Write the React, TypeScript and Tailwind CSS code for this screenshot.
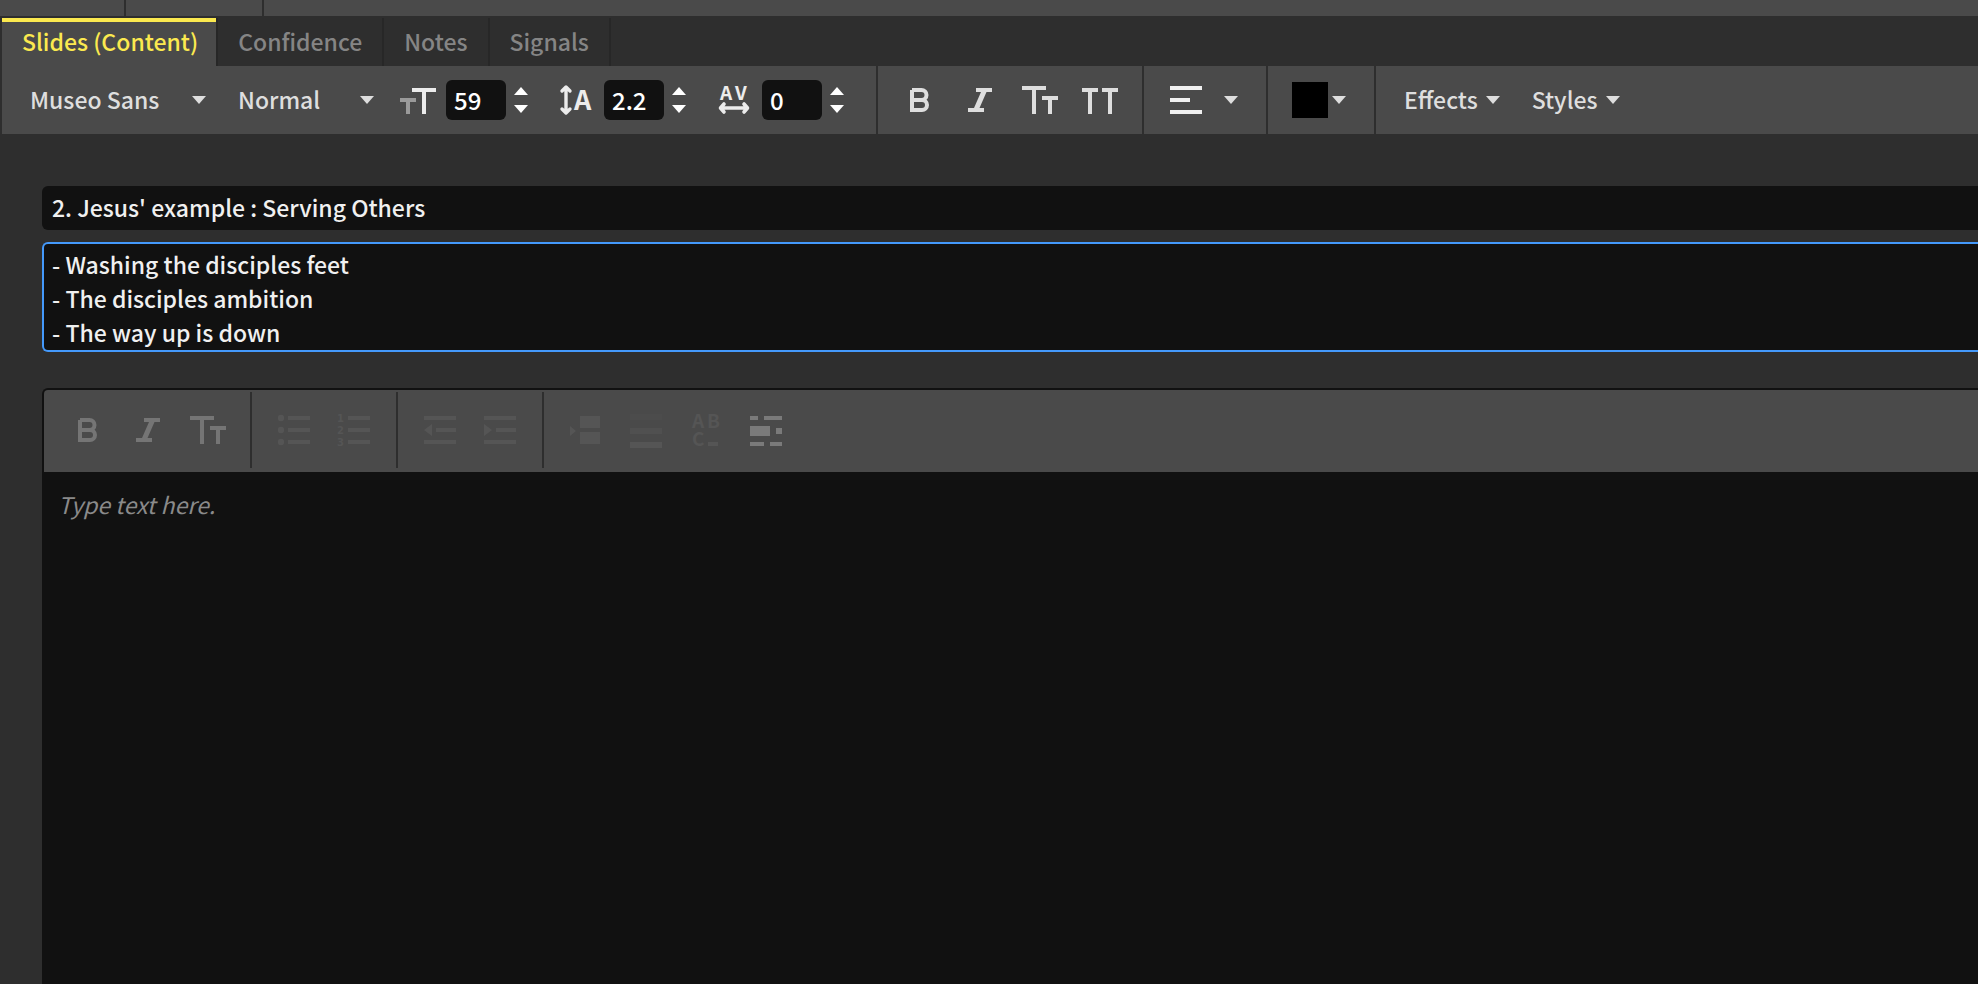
import { useState, type ReactNode } from "react";

function Icon({ children, className = "" }: { children: ReactNode; className?: string }) {
  return (
    <svg width="36" height="32" viewBox="0 0 36 32" fill="currentColor" aria-hidden="true" className={`shrink-0 overflow-visible ${className}`}>
      {children}
    </svg>
  );
}

const BoldIcon = () => (
  <Icon>
    <path d="M10 6H19.5A5 5 0 0 1 19.5 16H10M19.5 16H20A5 5 0 0 1 20 26H10V6" fill="none" stroke="currentColor" strokeWidth="4" />
  </Icon>
);

const ItalicIcon = () => (
  <Icon>
    <path d="M14 4H30V8H24.5L17.5 24H22V28H6V24H12L19 8H14Z" />
  </Icon>
);

const SmallCapsIcon = () => (
  <Icon>
    <path d="M0 2H24V6H14V30H10V6H0ZM20 12H36V16H30V30H26V16H20Z" />
  </Icon>
);

const AllCapsIcon = () => (
  <Icon>
    <path d="M0 4H16V8H10V30H6V8H0ZM20 4H36V8H30V30H26V8H20Z" />
  </Icon>
);

const FontSizeIcon = () => (
  <Icon>
    <path d="M0 14H16V18H10V30H6V18H0Z" fill="#9a9a9a" />
    <path d="M12 4H36V8H26V30H22V8H12Z" />
  </Icon>
);

const LineHeightIcon = () => (
  <Icon>
    <path d="M8 4V28M4 7L8 3L12 7M4 25L8 29L12 25" fill="none" stroke="currentColor" strokeWidth="3.4" strokeLinecap="round" strokeLinejoin="round" />
    <text x="16" y="26" className="text-[27px] font-bold">A</text>
  </Icon>
);

const TrackingIcon = () => (
  <Icon>
    <text x="4" y="16" className="text-[19px] font-bold">A</text>
    <text x="19" y="16" className="text-[19px] font-bold">V</text>
    <path d="M5 24H31M8 20L4.5 24L8 28M28 20L31.5 24L28 28" fill="none" stroke="currentColor" strokeWidth="3.6" strokeLinecap="round" strokeLinejoin="round" />
  </Icon>
);

const AlignLeftIcon = () => (
  <svg width="32" height="28" viewBox="0 0 32 28" fill="#f0f0f0" aria-hidden="true">
    <path d="M0 0H32V4H0ZM0 12H20V16H0ZM0 24H32V28H0Z" />
  </svg>
);

const BulletsIcon = () => (
  <Icon>
    <circle cx="5" cy="4" r="3.2" />
    <circle cx="5" cy="16" r="3.2" />
    <circle cx="5" cy="28" r="3.2" />
    <path d="M12 2H34V6H12ZM12 14H34V18H12ZM12 26H34V30H12Z" />
  </Icon>
);

const NumbersIcon = () => (
  <Icon>
    <g className="font-['DejaVu_Sans',sans-serif] text-[10px] font-bold">
      <text x="1" y="8">1</text>
      <text x="1" y="20">2</text>
      <text x="1" y="32">3</text>
    </g>
    <path d="M12 2H34V6H12ZM12 14H34V18H12ZM12 26H34V30H12Z" />
  </Icon>
);

const OutdentIcon = () => (
  <Icon>
    <path d="M2 2H34V6H2ZM14 14H34V18H14ZM2 26H34V30H2ZM2 16L10 10V22Z" />
  </Icon>
);

const IndentIcon = () => (
  <Icon>
    <path d="M2 2H34V6H2ZM14 14H34V18H14ZM2 26H34V30H2ZM10 16L2 10V22Z" />
  </Icon>
);

const InsertSlideIcon = () => (
  <Icon>
    <path d="M2 12L8 17L2 22ZM12 2H32V14H12ZM12 18H32V30H12Z" />
  </Icon>
);

const FadeLinesIcon = () => (
  <Icon>
    <path d="M2 0H34V6H2Z" opacity="0.25" />
    <path d="M2 14H34V20H2Z" opacity="0.6" />
    <path d="M2 28H34V34H2Z" />
  </Icon>
);

const FillBlankIcon = () => (
  <Icon>
    <text className="text-[19px] font-bold">
      <tspan x="4" y="14">A</tspan>
      <tspan x="19" y="14">B</tspan>
      <tspan x="4" y="32">C</tspan>
    </text>
    <path d="M20 28H30V32H20Z" />
  </Icon>
);

const HighlightIcon = () => (
  <Icon>
    <path d="M2 2H10V6H2ZM16 2H34V6H16ZM2 12H22V22H2ZM28 14H34V20H28ZM2 28H16V32H2ZM22 28H34V32H22Z" />
  </Icon>
);

function Caret({ up = false, className = "" }: { up?: boolean; className?: string }) {
  return (
    <svg width="14" height="8" viewBox="0 0 14 8" fill="currentColor" aria-hidden="true" className={`shrink-0 ${className}`}>
      <path d={up ? "M7 0L14 8H0Z" : "M0 0H14L7 8Z"} />
    </svg>
  );
}

function ToolButton({ label, children, disabled }: { label: string; children: ReactNode; disabled?: boolean }) {
  return (
    <button type="button" aria-label={label} disabled={disabled} className="flex h-10 w-[60px] shrink-0 items-center justify-center">
      {children}
    </button>
  );
}

function FontSelect({ label, options, className }: { label: string; options: string[]; className: string }) {
  return (
    <div className={`relative flex items-center ${className}`}>
      <select aria-label={label} className="h-10 w-full appearance-none bg-transparent pb-[2px] outline-none">
        {options.map((o) => (
          <option key={o}>{o}</option>
        ))}
      </select>
      <Caret className="pointer-events-none absolute right-0" />
    </div>
  );
}

function Stepper({ label, icon, initial, step }: { label: string; icon: ReactNode; initial: number; step: number }) {
  const [value, setValue] = useState(String(initial));
  const bump = (d: number) => setValue((v) => String(Math.round((Number(v) + d) * 10) / 10));
  return (
    <div className="flex items-center">
      <label className="flex items-center gap-[10px] text-[#ececec]">
        {icon}
        <input
          aria-label={label}
          inputMode="decimal"
          value={value}
          onChange={(e) => setValue(e.target.value)}
          className="h-10 w-[60px] rounded-md bg-[#111] px-2 pb-[2px] text-[24px] text-white outline-none"
        />
      </label>
      <div className="ml-2 flex flex-col gap-[10px] text-white">
        <button type="button" aria-label={`Increase ${label}`} onClick={() => bump(step)}>
          <Caret up />
        </button>
        <button type="button" aria-label={`Decrease ${label}`} onClick={() => bump(-step)}>
          <Caret />
        </button>
      </div>
    </div>
  );
}

const tabs = ["Slides (Content)", "Confidence", "Notes", "Signals"];

export default function App() {
  const [active, setActive] = useState(tabs[0]);
  const [title, setTitle] = useState("2. Jesus' example : Serving Others");
  const [body, setBody] = useState("- Washing the disciples feet\n- The disciples ambition\n- The way up is down");

  return (
    <div className="flex min-h-screen flex-col overflow-hidden bg-[#2e2e2e] font-['Noto_Sans_CJK_SC',sans-serif] text-[23px] leading-[34px] font-medium text-[#dedede]">
      <div className="flex h-4 shrink-0 bg-[#4a4a4a]">
        <div className="w-[126px] border-r-2 border-[#2e2e2e]" />
        <div className="w-[138px] border-r-2 border-[#2e2e2e]" />
      </div>

      <div role="tablist" className="mt-[2px] ml-[2px] flex h-12 shrink-0">
        {tabs.map((t) => (
          <button
            key={t}
            type="button"
            role="tab"
            aria-selected={t === active}
            onClick={() => setActive(t)}
            className="flex border-r-2 border-[#272727]"
          >
            <span
              className={
                t === active
                  ? "h-12 border-t-4 border-[#fbe94f] bg-[#4a4a4a] pt-[2px] pr-[18px] pl-5 text-[#fbe94f]"
                  : "h-12 px-5 pt-[6px] text-[#858585]"
              }
            >
              {t}
            </span>
          </button>
        ))}
      </div>

      <div role="toolbar" aria-label="Text formatting" className="ml-[2px] flex h-[68px] shrink-0 bg-[#4a4a4a]">
        <div className="flex items-center border-r-2 border-[#2e2e2e] pr-8 pl-7">
          <FontSelect label="Font family" options={["Museo Sans"]} className="w-44" />
          <FontSelect label="Font weight" options={["Normal"]} className="ml-8 w-[136px]" />
          <div className="ml-[26px] flex gap-[30px]">
            <Stepper label="Font size" icon={<FontSizeIcon />} initial={59} step={1} />
            <Stepper label="Line height" icon={<LineHeightIcon />} initial={2.2} step={0.1} />
            <Stepper label="Letter spacing" icon={<TrackingIcon />} initial={0} step={1} />
          </div>
        </div>
        <div className="flex items-center border-r-2 border-[#2e2e2e] px-3">
          <ToolButton label="Bold"><BoldIcon /></ToolButton>
          <ToolButton label="Italic"><ItalicIcon /></ToolButton>
          <ToolButton label="Small caps"><SmallCapsIcon /></ToolButton>
          <ToolButton label="All caps"><AllCapsIcon /></ToolButton>
        </div>
        <button type="button" aria-label="Alignment" className="flex items-center gap-[22px] border-r-2 border-[#2e2e2e] pr-7 pl-[26px]">
          <AlignLeftIcon />
          <Caret />
        </button>
        <button type="button" aria-label="Text color" className="flex items-center gap-1 border-r-2 border-[#2e2e2e] pr-7 pl-6">
          <span className="size-9 bg-black" />
          <Caret />
        </button>
        <div className="flex items-center gap-8 pl-7">
          <button type="button" className="flex items-center gap-2">
            <span className="pb-[2px]">Effects</span> <Caret />
          </button>
          <button type="button" className="flex items-center gap-2">
            <span className="pb-[2px]">Styles</span> <Caret />
          </button>
        </div>
      </div>

      <main className="flex grow flex-col pt-[52px] pl-[42px]">
        <input
          aria-label="Slide title"
          value={title}
          onChange={(e) => setTitle(e.target.value)}
          className="h-11 w-full shrink-0 rounded-l-md bg-[#111] px-[10px] pb-[2px] text-[#f0f0f0] outline-none"
        />
        <textarea
          aria-label="Slide body"
          rows={3}
          value={body}
          onChange={(e) => setBody(e.target.value)}
          className="mt-3 block w-full shrink-0 resize-none overflow-hidden rounded-l-md border-y-2 border-l-2 border-[#4499fb] bg-[#111] px-2 pt-[3px] pb-px text-[#f0f0f0] outline-none"
        />

        <section aria-label="Notes editor" className="mt-9 flex grow flex-col overflow-hidden rounded-tl-md border-t-2 border-l-2 border-[#111] bg-[#111]">
          <div role="toolbar" aria-label="Notes formatting" className="flex shrink-0 bg-[#4a4a4a] pt-[2px] pb-1 text-[#555]">
            <div className="flex h-[76px] items-center border-r-2 border-[#2e2e2e] pr-3 pl-[14px] text-[#757575]">
              <ToolButton label="Bold" disabled><BoldIcon /></ToolButton>
              <ToolButton label="Italic" disabled><ItalicIcon /></ToolButton>
              <ToolButton label="Small caps" disabled><SmallCapsIcon /></ToolButton>
            </div>
            <div className="flex h-[76px] items-center border-r-2 border-[#2e2e2e] px-3">
              <ToolButton label="Bulleted list" disabled><BulletsIcon /></ToolButton>
              <ToolButton label="Numbered list" disabled><NumbersIcon /></ToolButton>
            </div>
            <div className="flex h-[76px] items-center border-r-2 border-[#2e2e2e] px-3">
              <ToolButton label="Decrease indent" disabled><OutdentIcon /></ToolButton>
              <ToolButton label="Increase indent" disabled><IndentIcon /></ToolButton>
            </div>
            <div className="flex h-[76px] items-center px-3">
              <ToolButton label="Insert slide" disabled><InsertSlideIcon /></ToolButton>
              <ToolButton label="Fade lines" disabled><FadeLinesIcon /></ToolButton>
              <ToolButton label="Fill in the blank" disabled><FillBlankIcon /></ToolButton>
              <span className="flex text-[#7a7a7a]">
                <ToolButton label="Highlight"><HighlightIcon /></ToolButton>
              </span>
            </div>
          </div>
          <textarea
            aria-label="Notes"
            placeholder="Type text here."
            className="w-full grow resize-none bg-transparent px-[14px] pt-[15px] font-normal text-[#f0f0f0] outline-none placeholder:text-[#8a8a8a] placeholder:italic"
          />
        </section>
      </main>
    </div>
  );
}
